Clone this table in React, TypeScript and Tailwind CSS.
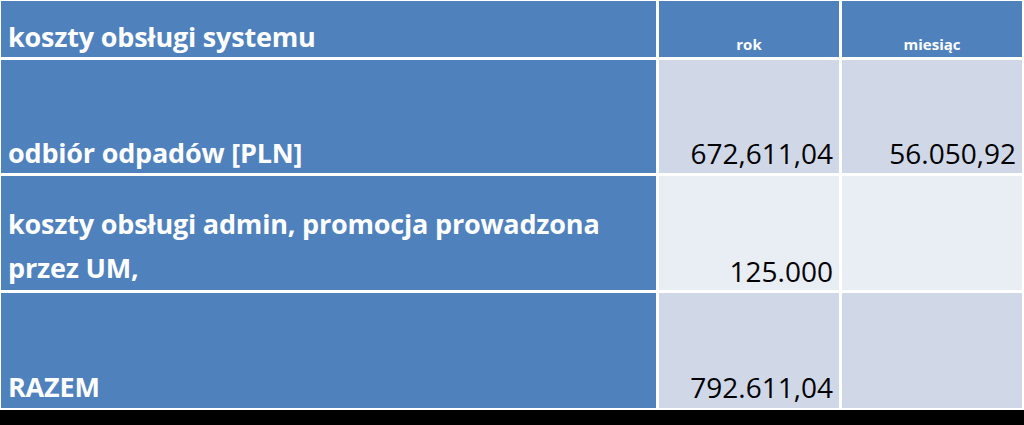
import React from "react";

const font = { fontFamily: '"Open Sans", "Noto Sans", sans-serif' };

export default function App() {
  return (
    <div className="w-[1024px] h-[425px] bg-black overflow-hidden" style={font}>
      <div className="w-[1024px] bg-white pt-px pl-px pr-[2px] pb-[2px] grid grid-cols-[655px_180px_180px] grid-rows-[56px_113px_114px_115px] gap-[3px]">
        {/* header */}
        <div className="bg-[#4f81bd] flex items-end pl-[7px] pb-[7px]">
          <span className="text-white font-bold text-[27px] leading-none tracking-[-0.2px]">koszty obsługi systemu</span>
        </div>
        <div className="bg-[#4f81bd] flex items-end justify-center pb-[5px]">
          <span className="text-white font-bold text-[15px] leading-none">rok</span>
        </div>
        <div className="bg-[#4f81bd] flex items-end justify-center pb-[5px]">
          <span className="text-white font-bold text-[15px] leading-none">miesiąc</span>
        </div>

        {/* row 1 */}
        <div className="bg-[#4f81bd] flex items-end pl-[7px] pb-[4px]">
          <span className="text-white font-bold text-[27px] leading-[32px] tracking-[-0.2px]">odbiór odpadów [PLN]</span>
        </div>
        <div className="bg-[#d0d8e8] flex items-end justify-end pr-[6px] pb-[4px]">
          <span className="text-black text-[28px] leading-[32px]">672,611,04</span>
        </div>
        <div className="bg-[#d0d8e8] flex items-end justify-end pr-[6px] pb-[4px]">
          <span className="text-black text-[28px] leading-[32px]">56.050,92</span>
        </div>

        {/* row 2 */}
        <div className="bg-[#4f81bd] flex items-end pl-[7px] pb-0">
          <span className="text-white font-bold text-[27px] leading-[44px] tracking-[-0.2px]">
            koszty obsługi admin, promocja prowadzona
            <br />
            przez UM,
          </span>
        </div>
        <div className="bg-[#e9edf4] flex items-end justify-end pr-[6px] pb-[3px]">
          <span className="text-black text-[28px] leading-[32px]">125.000</span>
        </div>
        <div className="bg-[#e9edf4]" />

        {/* row 3 */}
        <div className="bg-[#4f81bd] flex items-end pl-[7px] pb-[5px]">
          <span className="text-white font-bold text-[27px] leading-[32px] tracking-[-0.2px]">RAZEM</span>
        </div>
        <div className="bg-[#d0d8e8] flex items-end justify-end pr-[6px] pb-[5px]">
          <span className="text-black text-[28px] leading-[32px]">792.611,04</span>
        </div>
        <div className="bg-[#d0d8e8]" />
      </div>
    </div>
  );
}
